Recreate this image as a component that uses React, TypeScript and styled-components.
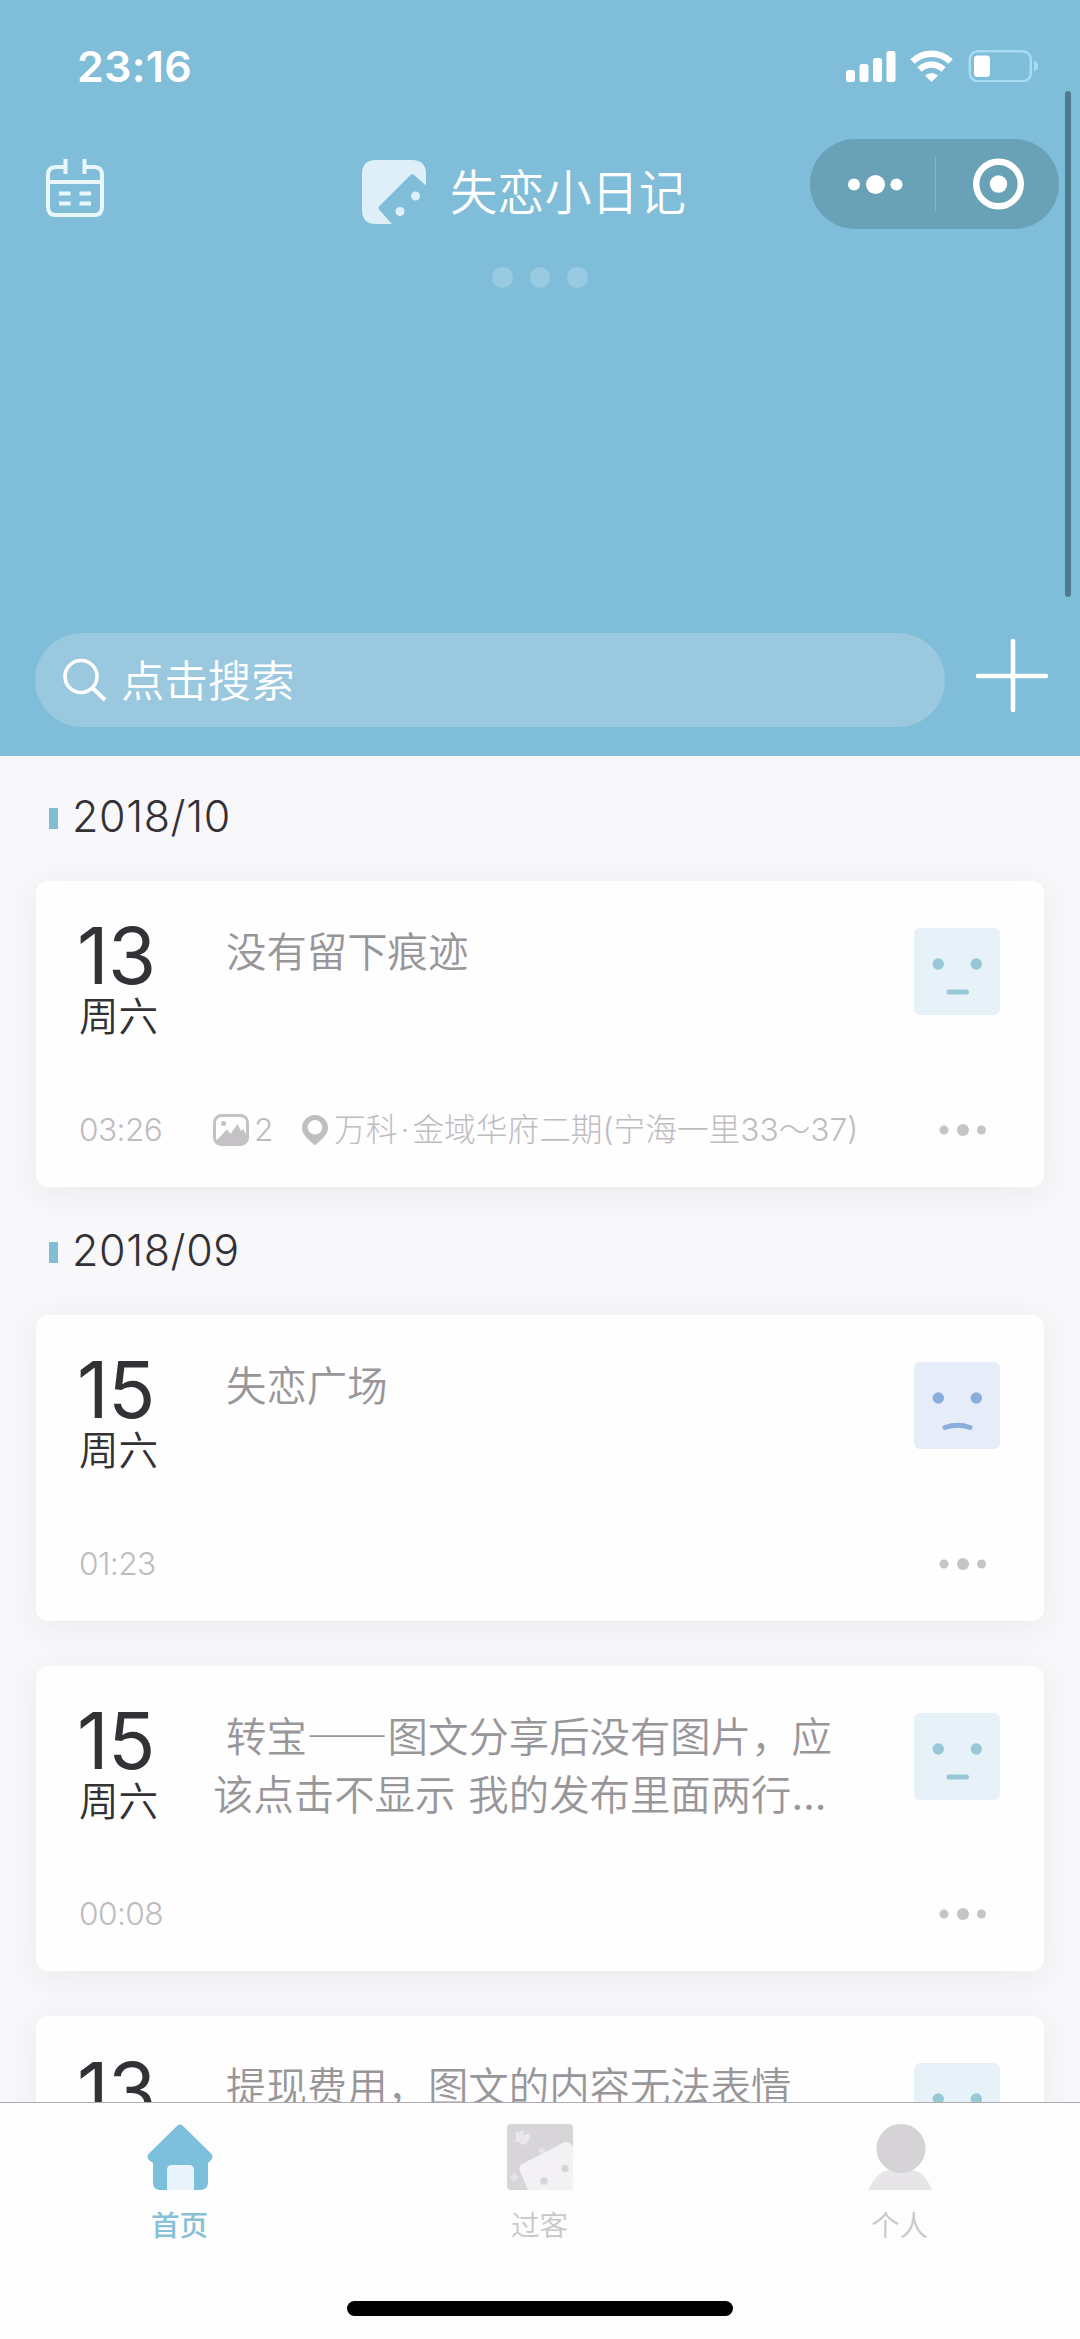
import React from "react";
import styled, { createGlobalStyle } from "styled-components";

const GlobalStyle = createGlobalStyle`
  * { box-sizing: border-box; }
  body { margin: 0; background: #f8f7f9; }
  svg { display: block; flex: none; }
`;

const latin = `Inter, "Noto Sans CJK SC", sans-serif`;
const cjk = `"Noto Sans CJK SC", sans-serif`;

const Screen = styled.div`
  position: relative;
  width: 1080px;
  height: 2339px;
  overflow: hidden;
  display: flex;
  flex-direction: column;
  background: #f8f7f9;
  font-family: ${latin};
  font-weight: 300;
  color: #333135;
`;

const Header = styled.header`
  height: 755.5px;
  flex: none;
  display: flex;
  flex-direction: column;
  background: #7fbdd9;
  color: #fff;
`;

const StatusBar = styled.div`
  height: 139px;
  flex: none;
  display: flex;
  justify-content: space-between;
  padding: 42px 42px 0 77px;
`;

const Clock = styled.time`
  font-size: 43px;
  line-height: 49px;
  font-weight: 600;
  letter-spacing: 0.3px;
`;

const StatusIcons = styled.div`
  display: flex;
  gap: 14px;
  padding-top: 8px;
`;

const NavBar = styled.nav`
  height: 90px;
  flex: none;
  display: flex;
  align-items: center;
  padding: 0 21px 0 46px;
`;

const CalendarIcon = styled.svg`
  margin-top: 7px;
`;

const Brand = styled.div`
  display: flex;
  align-items: center;
  gap: 24px;
  margin: 15px 0 0 258px;
`;

const BrandName = styled.h1`
  margin: 0 0 4px;
  font: 350 47.2px/60px ${cjk};
  white-space: nowrap;
`;

const Capsule = styled.div`
  width: 249px;
  height: 90px;
  margin-left: auto;
  display: grid;
  grid-template-columns: 125px 1px 1fr;
  align-items: center;
  justify-items: center;
  border-radius: 45px;
  background: #69a2b6;
`;

const CapsuleDivider = styled.i`
  width: 1px;
  height: 54px;
  background: #86b5c6;
`;

const Pager = styled.div`
  display: flex;
  justify-content: center;
  gap: 17px;
  padding-top: 38px;
`;

const PagerDot = styled.i`
  width: 20.5px;
  height: 20.5px;
  border-radius: 50%;
  background: #98cae2;
`;

const SearchRow = styled.div`
  display: flex;
  align-items: flex-start;
  margin-top: auto;
  padding: 0 32px 28.5px 35px;
`;

const SearchField = styled.div`
  width: 910px;
  height: 94px;
  display: flex;
  align-items: center;
  gap: 14px;
  padding: 0 27px;
  border-radius: 47px;
  background: #9ac8de;
`;

const SearchHint = styled.span`
  margin-bottom: 5px;
  font: 350 43.4px/60px ${cjk};
`;

const AddIcon = styled.svg`
  margin: 6px 0 0 auto;
`;

const Timeline = styled.main`
  flex: 1;
  min-height: 0;
  overflow: hidden;
  padding: 0 36px;
`;

const Month = styled.h2<{ $first?: boolean }>`
  margin: 0;
  height: ${(p) => (p.$first ? "125.5px" : "128.5px")};
  padding: ${(p) => (p.$first ? "33px" : "36px")} 0 0 13px;
  display: flex;
  gap: 14px;
  font: 300 43px/54px ${latin};
  letter-spacing: 0.6px;
`;

const MonthMark = styled.i`
  width: 9px;
  height: 21px;
  margin-top: 19.5px;
  background: #82bdd3;
`;

const Card = styled.article`
  height: 305.5px;
  display: flex;
  flex-direction: column;
  justify-content: space-between;
  padding: 33px 44px 34px 43px;
  border-radius: 12px;
  background: #fefefe;
  box-shadow: 0 6px 32px rgba(60, 50, 70, 0.07);

  & + & { margin-top: 45px; }
`;

const CardTop = styled.div`
  display: flex;
`;

const DateBlock = styled.div`
  width: 134px;
  flex: none;
`;

const Day = styled.div`
  font: 400 78px/80px ${latin};
  letter-spacing: -0.8px;
  margin: 2px 0 0 -2px;
`;

const Weekday = styled.div`
  font: 350 39.6px/40px ${cjk};
  margin-top: -2px;
`;

const Title = styled.p`
  width: 630px;
  margin: 7px 0 0;
  font: 350 40.4px/58px ${cjk};
  word-spacing: 4px;
  color: #99969a;
  white-space: pre;
`;

const LongDash = styled.span`
  font-family: "Noto Sans CJK JP", sans-serif;
  font-weight: 500;
`;

const Ellipsis = styled.span`
  font-family: Inter, sans-serif;
  font-weight: 400;
`;

const Mood = styled.svg`
  margin: 14px 0 0 auto;
`;

const CardFoot = styled.div`
  height: 46px;
  display: flex;
  align-items: center;
  font-size: 31.7px;
  line-height: 46px;
  color: #bfbcc0;
`;

const Time = styled.span`
  width: 134px;
  letter-spacing: -0.6px;
`;

const PhotoCount = styled.span`
  display: flex;
  align-items: center;
  gap: 5px;
  width: 89px;
`;

const Place = styled.span`
  display: flex;
  align-items: center;
  gap: 6px;
  white-space: nowrap;
`;

const Dot = styled.span`
  display: inline-block;
  width: 15px;
  text-align: center;
`;

const MoreIcon = styled.svg`
  margin: 0 8px 0 auto;
`;

const TabBar = styled.footer`
  height: 237px;
  flex: none;
  border-top: 1.5px solid #aeacb0;
  background: #fdfdfd;
  display: flex;
  flex-direction: column;
  align-items: center;
`;

const Tabs = styled.div`
  width: 1080px;
  height: 198px;
  display: grid;
  grid-template-columns: repeat(3, 360px);
`;

const Tab = styled.div<{ $active?: boolean }>`
  display: flex;
  flex-direction: column;
  align-items: center;
  gap: 12px;
  padding: 21px 1px 0 0;
  font: ${(p) => (p.$active ? 500 : 350)} 28.6px/44px ${cjk};
  color: ${(p) => (p.$active ? "#86c1d6" : "#c9c7cb")};
`;

const HomeIndicator = styled.i`
  width: 386px;
  height: 15px;
  border-radius: 8px;
  background: #000;
`;

const ScrollThumb = styled.i`
  position: absolute;
  right: 9px;
  top: 91px;
  width: 6.5px;
  height: 506px;
  border-radius: 4px;
  background: #4d7a8f;
`;

function MoodFace({ sad }: { sad?: boolean }) {
  const ink = sad ? "#8aaedb" : "#98c8d6";
  return (
    <Mood width="86" height="87" viewBox="0 0 86 87">
      <rect width="86" height="87" rx="6" fill={sad ? "#e6ecf8" : "#e6f2f8"} />
      <circle cx="24.3" cy="36" r="5.7" fill={ink} />
      <circle cx="62.3" cy="36" r="5.7" fill={ink} />
      {sad ? (
        <path d="M31 65.500 Q43.500 61 56 65.500" fill="none" stroke={ink} strokeWidth="5" strokeLinecap="round" />
      ) : (
        <path d="M35 64 H52.500" stroke={ink} strokeWidth="5" strokeLinecap="round" />
      )}
    </Mood>
  );
}

function More() {
  return (
    <MoreIcon width="56" height="14" viewBox="0 0 56 14" fill="#c6c4c7">
      <circle cx="8" cy="7" r="4.500" />
      <circle cx="27" cy="7" r="6" />
      <circle cx="45.500" cy="7" r="4.500" />
    </MoreIcon>
  );
}

type Entry = {
  day: string;
  weekday: string;
  text: React.ReactNode;
  time: string;
  sad?: boolean;
  photos?: number;
  place?: React.ReactNode;
};

function EntryCard({ entry }: { entry: Entry }) {
  return (
    <Card>
      <CardTop>
        <DateBlock>
          <Day>{entry.day}</Day>
          <Weekday>{entry.weekday}</Weekday>
        </DateBlock>
        <Title> {entry.text}</Title>
        <MoodFace sad={entry.sad} />
      </CardTop>
      <CardFoot>
        <Time>{entry.time}</Time>
        {entry.photos && (
          <PhotoCount>
            <svg width="36" height="32" viewBox="0 0 36 32">
              <rect x="1.500" y="1.500" width="33" height="29" rx="7" fill="none" stroke="#c4c2c5" strokeWidth="3" />
              <circle cx="10.500" cy="9.500" r="2.500" fill="#c4c2c5" />
              <path d="M2 28 L14 15.500 L17.500 20 L24.500 10 L28 17 L30 15 L34 22 V25 Q34 31 28 31 H8 Q2 31 2 28Z" fill="#c4c2c5" />
            </svg>
            {entry.photos}
          </PhotoCount>
        )}
        {entry.place && (
          <Place>
            <svg width="26" height="30" viewBox="0 0 26 30">
              <path
                fillRule="evenodd"
                fill="#c0bec1"
                d="M13 0 A13 13 0 0 1 26 13 C26 20 18.500 25.500 14.500 29.200 Q13 30.500 11.500 29.200 C7.500 25.500 0 20 0 13 A13 13 0 0 1 13 0Z M13 5 A7.300 7.300 0 1 0 13 19.600 A7.300 7.300 0 1 0 13 5Z"
              />
            </svg>
            <span>{entry.place}</span>
          </Place>
        )}
        <More />
      </CardFoot>
    </Card>
  );
}

const october: Entry[] = [
  {
    day: "13",
    weekday: "周六",
    text: "没有留下痕迹",
    time: "03:26",
    photos: 2,
    place: (
      <>
        万科<Dot>·</Dot>金域华府二期(宁海一里33～37)
      </>
    ),
  },
];

const september: Entry[] = [
  { day: "15", weekday: "周六", text: "失恋广场", time: "01:23", sad: true },
  {
    day: "15",
    weekday: "周六",
    text: (
      <>
        转宝<LongDash lang="ja">——</LongDash>图文分享后没有图片，应{"\n"}该点击不显示 我的发布里面两行
        <Ellipsis>…</Ellipsis>
      </>
    ),
    time: "00:08",
  },
  { day: "13", weekday: "周四", text: "提现费用，图文的内容无法表情", time: "22:41" },
];

export default function App() {
  return (
    <Screen lang="zh-CN">
      <GlobalStyle />
      <Header>
        <StatusBar>
          <Clock>23:16</Clock>
          <StatusIcons>
            <svg width="50" height="32" viewBox="0 0 50 32" fill="#fff">
              <rect x="0" y="20" width="9" height="12" rx="2.500" />
              <rect x="13.500" y="14" width="9" height="18" rx="2.500" />
              <rect x="27" y="8" width="9" height="24" rx="2.500" />
              <rect x="40.500" y="1" width="9" height="31" rx="2.500" />
            </svg>
            <svg width="43" height="32" viewBox="0 0 43 32" fill="none">
              <path d="M2.500 11.500 A27 27 0 0 1 40.500 11.500" stroke="#fff" strokeWidth="6.500" />
              <path d="M9.500 19.500 A17 17 0 0 1 33.500 19.500" stroke="#fff" strokeWidth="6.200" />
              <path d="M15 25.500 Q21.500 20.500 28 25.500 L21.500 32Z" fill="#fff" />
            </svg>
            <svg width="71" height="32" viewBox="0 0 71 32" fill="none">
              <rect x="2.800" y="1.200" width="61" height="30" rx="8" stroke="#a9dcf2" strokeWidth="2.400" />
              <rect x="7" y="5.500" width="16" height="21.500" rx="3.500" fill="#fff" />
              <path d="M67 10.500 Q71 12 71 16 Q71 20 67 21.500Z" fill="#a9dcf2" />
            </svg>
          </StatusIcons>
        </StatusBar>

        <NavBar>
          <CalendarIcon width="58" height="58" viewBox="0 0 58 58" fill="none" stroke="#e9f7fd" strokeWidth="4">
            <path d="M19.500 8 H10 Q2 8 2 16 V48 Q2 56 10 56 H48 Q56 56 56 48 V16 Q56 8 48 8 H38.500" />
            <path d="M2 23 H56 M19.500 0 V15 M38.500 0 V15" />
            <path d="M13 34.500 H24.500 M33.500 34.500 H45 M13 44.500 H24.500 M33.500 44.500 H45" />
          </CalendarIcon>
          <Brand>
            <svg width="64" height="64" viewBox="0 0 64 64" fill="#dfeff7">
              <path d="M14 0 H50 Q64 0 64 14 V25.500 L52 15 Q50 13.500 48 15.500 L17 46.500 Q16 48 17 49.500 L30 64 H14 Q0 64 0 50 V14 Q0 0 14 0Z" />
              <circle cx="53.500" cy="36" r="4.500" />
              <circle cx="38" cy="51.500" r="4.500" />
            </svg>
            <BrandName>失恋小日记</BrandName>
          </Brand>
          <Capsule>
            <svg width="63" height="22" viewBox="0 0 63 22" fill="#fff">
              <circle cx="13" cy="11.500" r="6" />
              <circle cx="34.500" cy="11.500" r="9.500" />
              <circle cx="55.500" cy="11.500" r="6" />
            </svg>
            <CapsuleDivider />
            <svg width="52" height="52" viewBox="0 0 52 52">
              <circle cx="26.500" cy="26" r="22.300" fill="none" stroke="#fff" strokeWidth="6.400" />
              <circle cx="26.500" cy="26" r="8.700" fill="#fff" />
            </svg>
          </Capsule>
        </NavBar>

        <Pager>
          <PagerDot />
          <PagerDot />
          <PagerDot />
        </Pager>

        <SearchRow>
          <SearchField>
            <svg width="45" height="44" viewBox="0 0 45 44" fill="none" stroke="#fff" strokeWidth="3.600">
              <circle cx="19" cy="18.500" r="16" />
              <path d="M30.500 30 L43 42" strokeWidth="4" />
            </svg>
            <SearchHint>点击搜索</SearchHint>
          </SearchField>
          <AddIcon width="72" height="73" viewBox="0 0 72 73" stroke="#fff" strokeWidth="4.600" strokeLinecap="round">
            <path d="M2 37 H70 M37 2 V71" />
          </AddIcon>
        </SearchRow>
      </Header>

      <Timeline>
        <Month $first>
          <MonthMark />
          2018/10
        </Month>
        {october.map((e, i) => (
          <EntryCard key={i} entry={e} />
        ))}
        <Month>
          <MonthMark />
          2018/09
        </Month>
        {september.map((e, i) => (
          <EntryCard key={i} entry={e} />
        ))}
      </Timeline>

      <TabBar>
        <Tabs>
          <Tab $active>
            <svg width="66" height="66" viewBox="0 0 66 66">
              <path
                fill="#7bbfda"
                d="M30.500 1.500 Q33 -0.500 35.500 1.500 L64 29.500 Q67 33 64 36 L61 39 V58 Q61 66 53 66 H13 Q6 66 6 58 V39 L2 36 Q-1 33 2 29.500Z"
              />
              <path fill="#e9f3fa" d="M20 66 V46 Q20 41 25 41 H42 Q47 41 47 46 V66Z" />
            </svg>
            首页
          </Tab>
          <Tab>
            <svg width="66" height="66" viewBox="0 0 66 66">
              <rect width="66" height="66" rx="4" fill="#d7d5d8" />
              <path
                fill="#f3f1f4"
                d="M13 47 Q11 42 16 39.500 L57 18.500 Q62 16.500 65 21 L66 23 V66 H21Z"
              />
              <path d="M10 8 L12 18 M16 7 L11 15 L20 12 L14 20 M22 12 L17 20" stroke="#e9e7ea" strokeWidth="3.500" fill="none" />
              <path d="M7 49 V57 M3 53 H11 M35 24 V30 M32 27 H38" stroke="#e6e4e7" strokeWidth="3" />
              <circle cx="58" cy="44.500" r="3.700" fill="#d7d5d8" />
              <circle cx="37" cy="57" r="3.700" fill="#d7d5d8" />
            </svg>
            过客
          </Tab>
          <Tab>
            <svg width="66" height="66" viewBox="0 0 66 66">
              <path fill="#e7e5e8" d="M1.500 66 Q10 46 24 46 H43 Q57 46 65 66Z" />
              <circle cx="34" cy="24.500" r="24.500" fill="#d5d3d6" />
            </svg>
            个人
          </Tab>
        </Tabs>
        <HomeIndicator />
      </TabBar>
      <ScrollThumb />
    </Screen>
  );
}
